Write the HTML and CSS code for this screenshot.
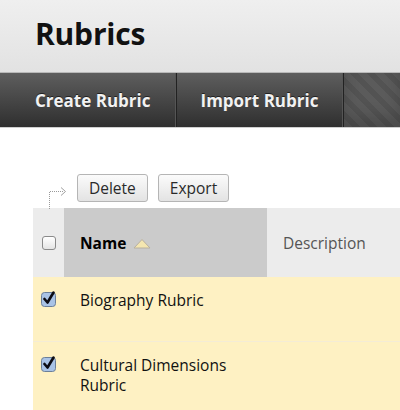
FILE: index.html
```html
<!DOCTYPE html>
<html>
<head>
<meta charset="utf-8">
<link rel="stylesheet" href="styles.css">
</head>
<body>
<div class="page-header"><h1 class="page-title">Rubrics</h1></div>
<nav class="action-bar">
  <a class="action">Create Rubric</a>
  <a class="action">Import Rubric</a>
  <div class="action-fill"></div>
</nav>
<div class="content">
  <div class="bulk-actions">
    <svg class="connector" width="20" height="22" viewBox="0 0 20 22">
      <path d="M1.5 22 V4.5 H15" fill="none" stroke="#9a9a9a" stroke-width="1" stroke-dasharray="1 1"/>
      <path d="M13 0.5 L17.5 4.5 L13 8.5" fill="none" stroke="#a0a0a0" stroke-width="1"/>
    </svg>
    <button class="btn">Delete</button>
    <button class="btn">Export</button>
  </div>
  <div class="grid">
    <div class="head-row">
      <div class="cell cell-check head-check"><span class="checkbox"></span></div>
      <div class="cell cell-name head-name">Name
        <svg class="sort" width="18" height="11" viewBox="0 0 18 11"><path d="M1 10 L9 1.5 L17 10 Z" fill="#f4e6b0" stroke="#b8b0a0" stroke-width="1" stroke-linejoin="round"/></svg>
      </div>
      <div class="cell cell-desc head-desc">Description</div>
    </div>
    <div class="row">
      <div class="cell cell-check"><svg class="checked" width="16" height="16" viewBox="0 0 16 16"><rect x="0.5" y="1.5" width="14" height="14" rx="3" fill="#a9c3e6" stroke="#6b7f99"/><path d="M3.5 8 L6.5 11.5 L12.5 1.5" fill="none" stroke="#0c0c14" stroke-width="2.6" stroke-linecap="round" stroke-linejoin="round"/></svg></div>
      <div class="cell cell-name">Biography Rubric</div>
      <div class="cell cell-desc"></div>
    </div>
    <div class="row">
      <div class="cell cell-check"><svg class="checked" width="16" height="16" viewBox="0 0 16 16"><rect x="0.5" y="1.5" width="14" height="14" rx="3" fill="#a9c3e6" stroke="#6b7f99"/><path d="M3.5 8 L6.5 11.5 L12.5 1.5" fill="none" stroke="#0c0c14" stroke-width="2.6" stroke-linecap="round" stroke-linejoin="round"/></svg></div>
      <div class="cell cell-name">Cultural Dimensions<br>Rubric</div>
      <div class="cell cell-desc"></div>
    </div>
  </div>
</div>
</body>
</html>
```
FILE: styles.css
```css
html, body {
  margin: 0;
  padding: 0;
  background: #fff;
  font-family: "Open Sans", "DejaVu Sans", sans-serif;
  overflow: hidden;
}
.page-header {
  height: 73px;
  box-sizing: border-box;
  background: linear-gradient(#efefef, #e2e2e2);
  border-bottom: 1px solid #b9b9b9;
  padding-left: 35px;
  display: flex;
  align-items: center;
}
.page-title {
  margin: 0;
  font-size: 30px;
  font-weight: 700;
  color: #111;
  letter-spacing: -0.2px;
  position: relative;
  top: -3px;
}
.action-bar {
  display: flex;
  height: 54px;
  background: linear-gradient(#5e5e5e, #2f2f2f);
  border-bottom: 1px solid #cfcfcf;
}
.action {
  display: flex;
  align-items: center;
  padding: 0 25px 0 24px;
  font-size: 17px;
  font-weight: 700;
  color: #f2f2f2;
  border-right: 1px solid #222;
  box-shadow: inset -1px 0 0 #555;
  text-shadow: 0 -1px 0 #222;
}
.action:first-child { padding-left: 35px; padding-right: 25px; }
.action-fill {
  flex: 1;
  background: repeating-linear-gradient(45deg, #5b5b5b 0 6px, #535353 6px 12px);
  box-shadow: inset 0 -10px 16px rgba(0,0,0,0.18);
}
.content { padding-top: 45px; }
.bulk-actions {
  display: flex;
  align-items: center;
  gap: 10px;
  padding-left: 48px;
  height: 29px;
  position: relative;
}
.connector {
  margin-right: -1px;
  align-self: flex-end;
  margin-bottom: -7px;
}
.btn {
  font-family: "Open Sans", "DejaVu Sans", sans-serif;
  font-size: 15.5px;
  color: #2a2a2a;
  height: 28px;
  padding: 0 11px;
  background: linear-gradient(#fbfbfb, #e3e3e3);
  border: 1px solid #b5b5b5;
  border-radius: 3px;
  line-height: 26px;
}
.grid {
  margin-left: 33px;
  margin-top: 6px;
  width: 367px;
}
.head-row, .row {
  display: grid;
  grid-template-columns: 31px 203px 1fr;
}
.head-row { height: 69px; }
.cell {
  font-size: 15.5px;
  color: #111;
  line-height: 20px;
}
.head-row .cell {
  display: flex;
  align-items: center;
}
.head-check { background: #ececec; justify-content: center; }
.head-name {
  background: #cbcbcb;
  padding-left: 16px;
  font-weight: 700;
  color: #000;
  gap: 7px;
}
.head-desc {
  background: #ececec;
  padding-left: 16px;
  color: #555;
}
.sort { position: relative; top: 1px; }
.checkbox {
  width: 12px;
  height: 12px;
  border: 1px solid #8a8a8a;
  border-radius: 3px;
  background: linear-gradient(#fff, #e4e4e4);
  margin-left: 1px;
}
.row {
  background: #fef1c3;
  border-bottom: 1px solid #f4ecd6;
}
.row .cell { padding-top: 13px; padding-bottom: 15px; min-height: 35px; }
.row .cell-check { padding-left: 8px; padding-top: 14px; }
.row .cell-name { padding-left: 16px; }
.checked { display: block; }
```
